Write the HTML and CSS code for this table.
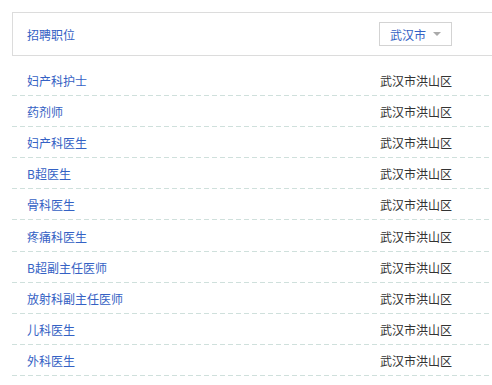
FILE: index.html
```html
<!DOCTYPE html>
<html lang="zh-CN">
<head>
<meta charset="utf-8">
<title>招聘职位</title>
<link rel="stylesheet" href="styles.css">
</head>
<body>
<div class="panel">
  <div class="panel-head">
    <span class="panel-title">招聘职位</span>
    <div class="select">
      <span class="select-text">武汉市</span>
      <span class="caret"></span>
    </div>
  </div>
  <ul class="jobs">
    <li class="job"><a class="job-name">妇产科护士</a><span class="job-loc">武汉市洪山区</span></li>
    <li class="job"><a class="job-name">药剂师</a><span class="job-loc">武汉市洪山区</span></li>
    <li class="job"><a class="job-name">妇产科医生</a><span class="job-loc">武汉市洪山区</span></li>
    <li class="job"><a class="job-name">B超医生</a><span class="job-loc">武汉市洪山区</span></li>
    <li class="job"><a class="job-name">骨科医生</a><span class="job-loc">武汉市洪山区</span></li>
    <li class="job"><a class="job-name">疼痛科医生</a><span class="job-loc">武汉市洪山区</span></li>
    <li class="job"><a class="job-name">B超副主任医师</a><span class="job-loc">武汉市洪山区</span></li>
    <li class="job"><a class="job-name">放射科副主任医师</a><span class="job-loc">武汉市洪山区</span></li>
    <li class="job"><a class="job-name">儿科医生</a><span class="job-loc">武汉市洪山区</span></li>
    <li class="job"><a class="job-name">外科医生</a><span class="job-loc">武汉市洪山区</span></li>
  </ul>
</div>
</body>
</html>
```

FILE: styles.css
```css
html, body {
  overflow: hidden;
}
body {
  margin: 0;
  padding: 12px 0 0 12px;
  background: #fff;
  font-family: "Microsoft YaHei", "Noto Sans CJK SC", "Noto Sans", sans-serif;
  font-size: 12px;
  color: #333;
}
.panel {
  width: 480px;
}
.panel-head {
  box-sizing: border-box;
  height: 44px;
  border: 1px solid #dcdcdc;
  border-right: none;
  display: flex;
  align-items: center;
  padding-left: 14px;
}
.panel-title {
  color: #3461c4;
  width: 352px;
}
.select {
  box-sizing: border-box;
  width: 73px;
  height: 24px;
  border: 1px solid #d3d3d3;
  display: flex;
  align-items: center;
  padding-left: 10px;
}
.select-text {
  color: #3461c4;
}
.caret {
  width: 0;
  height: 0;
  margin-left: 7px;
  border-left: 4px solid transparent;
  border-right: 4px solid transparent;
  border-top: 4px solid #aaa;
}
.jobs {
  list-style: none;
  margin: 9px 0 0;
  padding: 0;
}
.job {
  box-sizing: border-box;
  height: 31.1px;
  display: flex;
  align-items: center;
  padding-left: 15px;
  background-image: repeating-linear-gradient(to right, #cfe0dc 0 5px, transparent 5px 8px);
  background-size: 100% 1px;
  background-repeat: no-repeat;
  background-position: left bottom;
}
.job-name {
  width: 353px;
  color: #3461c4;
  text-decoration: none;
}
.job-loc {
  color: #333;
}
```
